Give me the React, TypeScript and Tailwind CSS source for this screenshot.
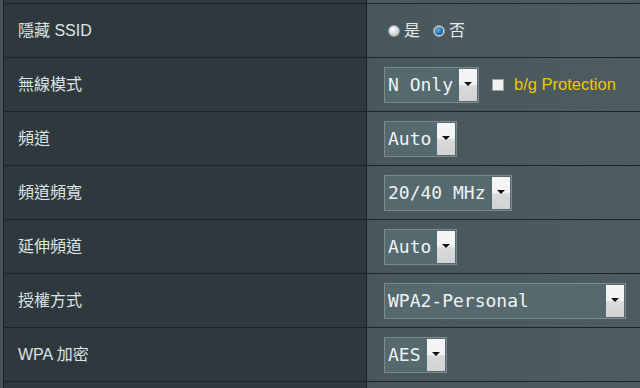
import type { ReactNode } from "react";

const label = "font-['Liberation_Sans','Noto_Sans_CJK_TC',sans-serif]";
const mono = "font-['DejaVu_Sans_Mono','Liberation_Mono',monospace]";

function Arrow() {
  return (
    <span className="ml-[6px] mr-[1px] flex h-[32px] w-[18px] items-start justify-center bg-[linear-gradient(#f6f6f6_0%,#f2f2f2_50%,#dadada_52%,#d2d2d2_100%)] pt-[13px]">
      <svg width="8" height="4" viewBox="0 0 8 4" aria-hidden="true">
        <path d="M0 0 H8 L4 4 Z" fill="#111" />
      </svg>
    </span>
  );
}

function Select({ value, wide }: { value: string; wide?: boolean }) {
  return (
    <div
      className={`flex h-[36px] items-center border border-[#7c8a8e] bg-[#56696f] pl-[3px] ${
        wide ? "w-[242px] justify-between" : ""
      }`}
    >
      <span className={`${mono} text-[18px] leading-none text-[#eef4f4]`}>{value}</span>
      <Arrow />
    </div>
  );
}

function Row({ title, children }: { title: string; children: ReactNode }) {
  return (
    <div className="grid h-[54px] grid-cols-[362px_1px_1fr] border-t border-[#1d2427]">
      <div className={`${label} flex items-center pl-[14px] text-[16px] text-[#dde4e6]`}>
        {title}
      </div>
      <div className="bg-[#1d2427]" />
      <div className="flex items-center bg-[linear-gradient(90deg,#48575c,#4c5c61)] pl-[17px]">
        {children}
      </div>
    </div>
  );
}

function Radio({ checked }: { checked?: boolean }) {
  if (checked) {
    return (
      <span className="flex h-[12px] w-[12px] items-center justify-center rounded-full border border-[#8a9599] bg-[#d8dcdd]">
        <span className="h-[8px] w-[8px] rounded-full bg-[radial-gradient(circle_at_40%_35%,#5fb0ee,#1769b0_60%,#0b3c66)]" />
      </span>
    );
  }
  return (
    <span className="h-[12px] w-[12px] rounded-full border border-[#8f9a9d] bg-[radial-gradient(circle_at_40%_35%,#ffffff,#c9cdcf_70%,#a9afb1)]" />
  );
}

export default function App() {
  return (
    <div className="h-[388px] w-[640px] overflow-hidden bg-[#46545a] pl-[3px]">
      <div className="border-l border-[#1d2427] bg-[#2f393d]">
        <div className="grid h-[3px] grid-cols-[362px_1px_1fr]">
          <div />
          <div className="bg-[#1d2427]" />
          <div className="bg-[#4a5a5f]" />
        </div>
        <Row title="隱藏 SSID">
          <div className={`${label} ml-[4px] flex items-center text-[16px] text-[#e6ecee]`}>
            <Radio />
            <span className="ml-[4px]">是</span>
            <span className="ml-[13px]">
              <Radio checked />
            </span>
            <span className="ml-[4px]">否</span>
          </div>
        </Row>
        <Row title="無線模式">
          <Select value="N Only" />
          <span className="ml-[13px] h-[12px] w-[12px] border border-[#9aa3a6] bg-[#f1f1f1]" />
          <span className={`${label} ml-[10px] text-[16.5px] text-[#f2c600]`}>b/g Protection</span>
        </Row>
        <Row title="頻道">
          <Select value="Auto" />
        </Row>
        <Row title="頻道頻寬">
          <Select value="20/40 MHz" />
        </Row>
        <Row title="延伸頻道">
          <Select value="Auto" />
        </Row>
        <Row title="授權方式">
          <Select value="WPA2-Personal" wide />
        </Row>
        <Row title="WPA 加密">
          <Select value="AES" />
        </Row>
        <Row title="">
          <span />
        </Row>
      </div>
    </div>
  );
}
